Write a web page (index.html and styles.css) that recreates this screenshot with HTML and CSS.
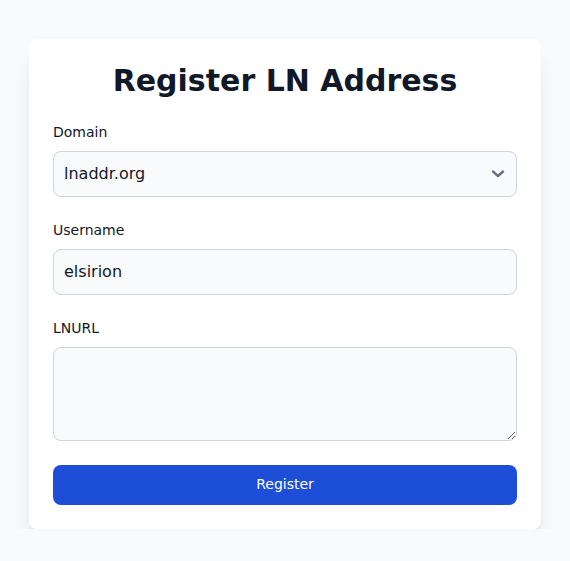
FILE: index.html
```html
<!DOCTYPE html>
<html>
<head>
<meta charset="utf-8">
<link rel="stylesheet" href="styles.css">
</head>
<body>
<main class="page">
  <form class="card">
    <h1 class="title">Register LN Address</h1>
    <div class="field">
      <label class="label" for="domain">Domain</label>
      <div class="select-wrap">
        <select id="domain" class="control select">
          <option>lnaddr.org</option>
        </select>
        <svg class="chevron" viewBox="0 0 14 10" width="14" height="10" aria-hidden="true"><path d="M2 2.5l5 4.5 5-4.5" fill="none" stroke="#6b7280" stroke-width="2.4" stroke-linecap="round" stroke-linejoin="round"/></svg>
      </div>
    </div>
    <div class="field">
      <label class="label" for="username">Username</label>
      <input id="username" class="control" type="text" value="elsirion">
    </div>
    <div class="field">
      <label class="label" for="lnurl">LNURL</label>
      <textarea id="lnurl" class="control textarea" rows="3"></textarea>
    </div>
    <button type="button" class="button">Register</button>
  </form>
</main>
</body>
</html>
```
FILE: styles.css
```css
* { box-sizing: border-box; }
html, body { margin: 0; padding: 0; }
body {
  background: #f9fafb;
  font-family: "DejaVu Sans", sans-serif;
  color: #111827;
}
.page {
  display: flex;
  justify-content: center;
  padding-top: 39px;
}
.card {
  width: 512px;
  background: #ffffff;
  border-radius: 8px;
  padding: 24px;
  box-shadow: 0 20px 25px -5px rgba(0,0,0,0.1), 0 8px 10px -6px rgba(0,0,0,0.1);
  display: flex;
  flex-direction: column;
}
.title {
  margin: 0 0 24px;
  font-size: 30px;
  line-height: 36px;
  font-weight: 700;
  text-align: center;
  color: #111827;
}
.field {
  display: flex;
  flex-direction: column;
  margin-bottom: 24px;
}
.label {
  font-size: 14px;
  line-height: 20px;
  margin: -1px 0 9px;
  color: #111827;
}
.control {
  display: block;
  width: 100%;
  font-family: "DejaVu Sans", sans-serif;
  font-size: 16px;
  line-height: 24px;
  padding: 10px;
  border: 1px solid #d1d5db;
  border-radius: 8px;
  background: #f9fafb;
  color: #111827;
  margin: 0;
  outline: none;
}
.select-wrap { position: relative; }
.select {
  -webkit-appearance: none;
  appearance: none;
  height: 46px;
  padding-right: 40px;
}
.chevron {
  position: absolute;
  right: 12px;
  top: 18px;
  pointer-events: none;
}
.textarea {
  height: 94px;
  resize: vertical;
}
.button {
  width: 100%;
  height: 40px;
  border: none;
  border-radius: 8px;
  background: #1d4ed8;
  color: #ffffff;
  font-family: "DejaVu Sans", sans-serif;
  font-size: 14px;
  line-height: 20px;
  padding: 9px 20px 11px;
}
```
